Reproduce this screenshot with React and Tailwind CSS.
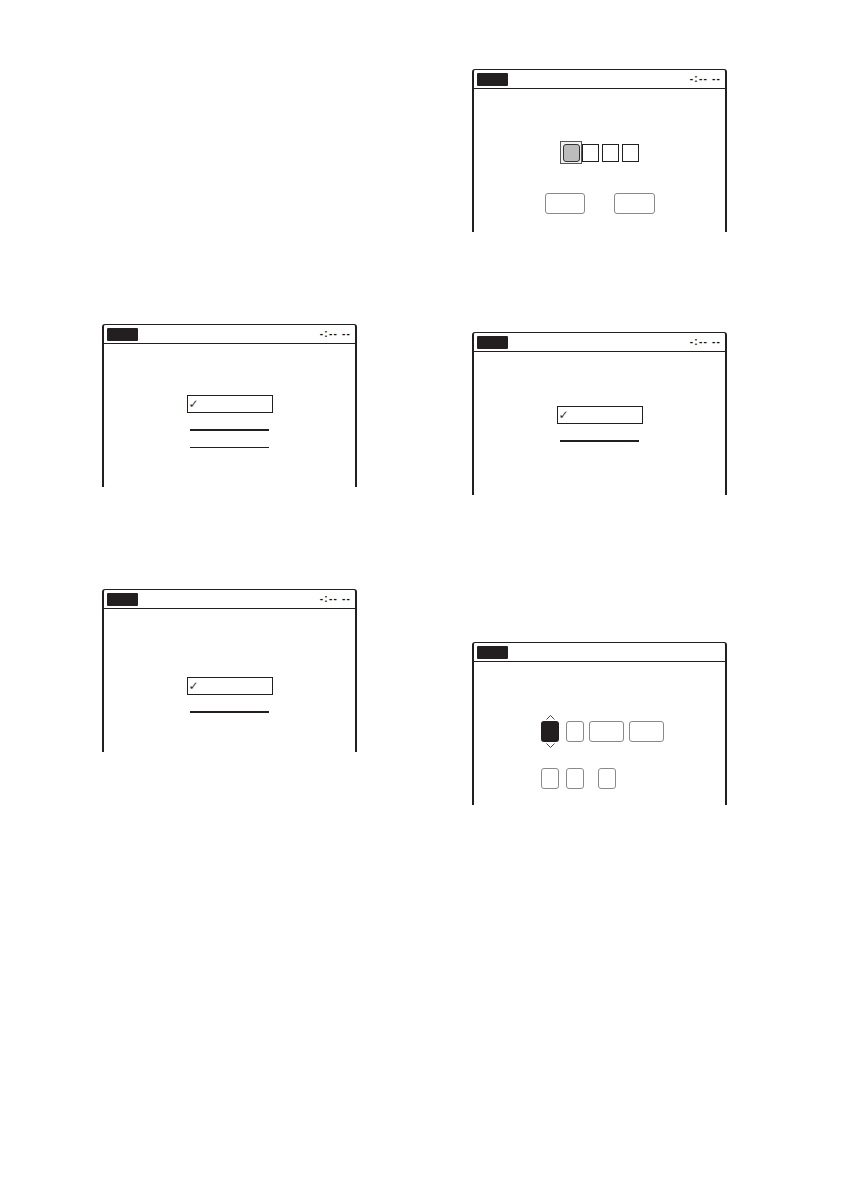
import React from 'react';

// one TV menu screen: frame open at the bottom, header with label + clock
const Screen = ({ clock = true, children, className = '' }) => (
  <div className="w-[255px] h-[163px] border-x-2 border-t-[1.5px] border-[#231f20] rounded-t-[3px] flex flex-col">
    <div className="h-[19px] shrink-0 border-b-[1.5px] border-[#231f20] flex items-center justify-between pl-[3px] pr-[4px]">
      <div className="w-[31px] h-[13px] bg-[#231f20] rounded-[1px]" />
      {clock && (
        <span
          className="text-[10px] leading-none tracking-[1.2px] text-[#111] font-bold"
          style={{ fontFamily: '"Liberation Sans", Arial, sans-serif' }}
        >
          -:-- --
        </span>
      )}
    </div>
    <div className={`flex-1 flex flex-col ${className}`}>{children}</div>
  </div>
);

const CheckedBox = () => (
  <div className="w-[86px] h-[18px] border-[1.5px] border-[#231f20] flex items-center pl-[1px]">
    <span
      className="text-[12px] leading-none text-[#333]"
      style={{ fontFamily: '"DejaVu Sans", sans-serif' }}
    >
      ✓
    </span>
  </div>
);

const Line = ({ className = '' }) => (
  <div className={`w-[79px] h-[1.5px] bg-[#231f20] ${className}`} />
);

const Pill = ({ w = 'w-[18px]' }) => (
  <div className={`${w} h-[21px] border border-[#8a8a8a] rounded-[3px]`} />
);

const Arrow = ({ up }) => (
  <svg width="9" height="5" viewBox="0 0 9 5" className={`absolute left-[4.5px] ${up ? '-top-[6px]' : '-bottom-[6px]'}`}>
    {up ? (
      <polyline points="0.5,4.5 4.5,0.5 8.5,4.5" fill="none" stroke="#333" strokeWidth="0.9" />
    ) : (
      <polyline points="0.5,0.5 4.5,4.5 8.5,0.5" fill="none" stroke="#333" strokeWidth="0.9" />
    )}
  </svg>
);

export default function App() {
  return (
    <div className="w-[841px] h-[1191px] bg-white flex pl-[102px] gap-[115px]">
      {/* left column */}
      <div className="flex flex-col pt-[324px]">
        <Screen className="items-center pt-[51px]">
          <CheckedBox />
          <Line className="mt-[16px]" />
          <Line className="mt-[16px]" />
        </Screen>
        <div className="mt-[102px]">
          <Screen className="items-center pt-[68px]">
            <CheckedBox />
            <Line className="mt-[16px]" />
          </Screen>
        </div>
      </div>

      {/* right column */}
      <div className="flex flex-col pt-[69px]">
        <Screen className="items-center pt-[52px]">
          <div className="flex items-center">
            <div className="w-[22px] h-[23px] border border-[#555] bg-[#f2f2f2] flex items-center justify-center">
              <div className="w-[17px] h-[18px] rounded-[3px] border border-[#333] bg-[#bcbcbc]" />
            </div>
            <div className="flex gap-[3px]">
              <div className="w-[17px] h-[18px] border border-[#231f20]" />
              <div className="w-[17px] h-[18px] border border-[#231f20]" />
              <div className="w-[17px] h-[18px] border border-[#231f20]" />
            </div>
          </div>
          <div className="flex gap-[29px] mt-[29px]">
            <Pill w="w-[40px]" />
            <Pill w="w-[41px]" />
          </div>
        </Screen>

        <div className="mt-[100px]">
          <Screen className="items-center pt-[54px]">
            <CheckedBox />
            <Line className="mt-[16px]" />
          </Screen>
        </div>

        <div className="mt-[147px]">
          <Screen clock={false} className="items-start pl-[67px] pt-[59px]">
            <div className="flex items-center">
              <div className="relative w-[18px] h-[21px] bg-[#231f20] rounded-[3px]">
                <Arrow up />
                <Arrow />
              </div>
              <div className="ml-[7px]"><Pill /></div>
              <div className="ml-[5px]"><Pill w="w-[35px]" /></div>
              <div className="ml-[5px]"><Pill w="w-[35px]" /></div>
            </div>
            <div className="flex items-center mt-[26px]">
              <Pill />
              <div className="ml-[7px]"><Pill /></div>
              <div className="ml-[14px]"><Pill /></div>
            </div>
          </Screen>
        </div>
      </div>
    </div>
  );
}
